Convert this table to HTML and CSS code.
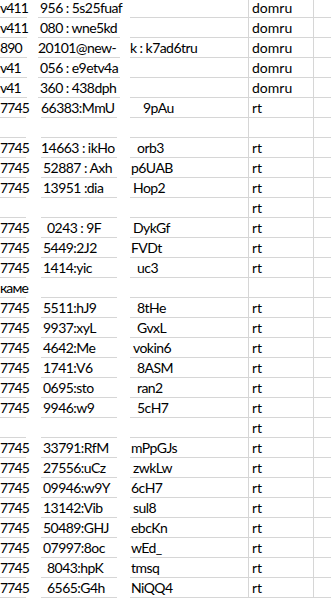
FILE: index.html
```html
<!DOCTYPE html>
<html>
<head>
<meta charset="utf-8">
<link rel="stylesheet" href="styles.css">
</head>
<body>
<div class="sheet">
  <div class="row"><div class="a"><span class="s1 w">v411</span><span class="s2 p1">956 : 5s25fuaf</span><span class="s3"></span></div><div class="b">domru</div><div class="c"></div></div>
  <div class="row"><div class="a"><span class="s1 w">v411</span><span class="s2 p1">080 : wne5kd</span><span class="s3"></span></div><div class="b">domru</div><div class="c"></div></div>
  <div class="row"><div class="a"><span class="s1 w">890</span><span class="s2">20101@new-</span><span class="s3">k : k7ad6tru</span></div><div class="b">domru</div><div class="c"></div></div>
  <div class="row"><div class="a"><span class="s1 w">v41</span><span class="s2 p1">056 : e9etv4a</span><span class="s3"></span></div><div class="b">domru</div><div class="c"></div></div>
  <div class="row"><div class="a"><span class="s1 w">v41</span><span class="s2 p1">360 : 438dph</span><span class="s3"></span></div><div class="b">domru</div><div class="c"></div></div>
  <div class="row"><div class="a"><span class="s1">7745</span><span class="s2">66383:MmU</span><span class="s3 q2">9pAu</span></div><div class="b">rt</div><div class="c"></div></div>
  <div class="row"><div class="a"><span class="s1"></span><span class="s2"></span><span class="s3"></span></div><div class="b"></div><div class="c"></div></div>
  <div class="row"><div class="a"><span class="s1">7745</span><span class="s2">14663 : ikHo</span><span class="s3 q3">orb3</span></div><div class="b">rt</div><div class="c"></div></div>
  <div class="row"><div class="a"><span class="s1">7745</span><span class="s2 p1">52887 : Axh</span><span class="s3 q0">p6UAB</span></div><div class="b">rt</div><div class="c"></div></div>
  <div class="row"><div class="a"><span class="s1">7745</span><span class="s2 p1">13951 :dia</span><span class="s3 q1">Hop2</span></div><div class="b">rt</div><div class="c"></div></div>
  <div class="row"><div class="a"><span class="s1"></span><span class="s2"></span><span class="s3"></span></div><div class="b">rt</div><div class="c"></div></div>
  <div class="row"><div class="a"><span class="s1">7745</span><span class="s2 p2">0243 : 9F</span><span class="s3 q1">DykGf</span></div><div class="b">rt</div><div class="c"></div></div>
  <div class="row"><div class="a"><span class="s1">7745</span><span class="s2 p1">5449:2J2</span><span class="s3 q0">FVDt</span></div><div class="b">rt</div><div class="c"></div></div>
  <div class="row"><div class="a"><span class="s1">7745</span><span class="s2 p1">1414:yic</span><span class="s3 q3">uc3</span></div><div class="b">rt</div><div class="c"></div></div>
  <div class="row"><div class="a"><span class="s1">каме</span><span class="s2"></span><span class="s3"></span></div><div class="b"></div><div class="c"></div></div>
  <div class="row"><div class="a"><span class="s1">7745</span><span class="s2 p1">5511:hJ9</span><span class="s3 q3">8tHe</span></div><div class="b">rt</div><div class="c"></div></div>
  <div class="row"><div class="a"><span class="s1">7745</span><span class="s2 p1">9937:xyL</span><span class="s3 q3">GvxL</span></div><div class="b">rt</div><div class="c"></div></div>
  <div class="row"><div class="a"><span class="s1">7745</span><span class="s2 p1">4642:Me</span><span class="s3 q1">vokin6</span></div><div class="b">rt</div><div class="c"></div></div>
  <div class="row"><div class="a"><span class="s1">7745</span><span class="s2 p1">1741:V6</span><span class="s3 q3">8ASM</span></div><div class="b">rt</div><div class="c"></div></div>
  <div class="row"><div class="a"><span class="s1">7745</span><span class="s2 p1">0695:sto</span><span class="s3 q3">ran2</span></div><div class="b">rt</div><div class="c"></div></div>
  <div class="row"><div class="a"><span class="s1">7745</span><span class="s2 p1">9946:w9</span><span class="s3 q3">5cH7</span></div><div class="b">rt</div><div class="c"></div></div>
  <div class="row"><div class="a"><span class="s1"></span><span class="s2"></span><span class="s3"></span></div><div class="b">rt</div><div class="c"></div></div>
  <div class="row"><div class="a"><span class="s1">7745</span><span class="s2 p1">33791:RfM</span><span class="s3 q0">mPpGJs</span></div><div class="b">rt</div><div class="c"></div></div>
  <div class="row"><div class="a"><span class="s1">7745</span><span class="s2 p1">27556:uCz</span><span class="s3 q1">zwkLw</span></div><div class="b">rt</div><div class="c"></div></div>
  <div class="row"><div class="a"><span class="s1">7745</span><span class="s2 p1">09946:w9Y</span><span class="s3 q0">6cH7</span></div><div class="b">rt</div><div class="c"></div></div>
  <div class="row"><div class="a"><span class="s1">7745</span><span class="s2 p1">13142:Vib</span><span class="s3 q1">sul8</span></div><div class="b">rt</div><div class="c"></div></div>
  <div class="row"><div class="a"><span class="s1">7745</span><span class="s2 p1">50489:GHJ</span><span class="s3 q0">ebcKn</span></div><div class="b">rt</div><div class="c"></div></div>
  <div class="row"><div class="a"><span class="s1">7745</span><span class="s2 p1">07997:8oc</span><span class="s3 q0">wEd_</span></div><div class="b">rt</div><div class="c"></div></div>
  <div class="row"><div class="a"><span class="s1">7745</span><span class="s2 p2">8043:hpK</span><span class="s3 q0">tmsq</span></div><div class="b">rt</div><div class="c"></div></div>
  <div class="row"><div class="a"><span class="s1">7745</span><span class="s2 p2">6565:G4h</span><span class="s3 q0">NiQQ4</span></div><div class="b">rt</div><div class="c"></div></div>
</div>
</body>
</html>
```

FILE: styles.css
```css
html, body {
  margin: 0;
  padding: 0;
  background: #fff;
  overflow: hidden;
}

.sheet {
  margin-top: -2px;
  width: 331px;
  font-family: Lato, "Open Sans", sans-serif;
  font-size: 14px;
  color: #000;
}

.row {
  display: flex;
  height: 20px;
}

.row > div,
.row span {
  box-sizing: border-box;
  height: 20px;
  line-height: 19px;
  white-space: nowrap;
}

.a {
  width: 249px;
  display: flex;
  letter-spacing: -0.55px;
  border-right: 1px solid #d6d6d6;
}

.s1 {
  width: 26px;
  letter-spacing: -0.9px;
  border-bottom: 1px solid #d6d6d6;
}

.s1.w {
  width: 27px;
}

.s2 {
  width: 76px;
  margin-left: 15px;
  padding-left: 0;
  border-bottom: 1px solid #d6d6d6;
}

.s1.w + .s2 {
  width: 82px;
  margin-left: 11px;
}

.s2.p1 { padding-left: 2px; }
.s2.p2 { padding-left: 6px; }

.s3 {
  flex: 1;
  margin-left: 13px;
  padding-left: 0;
  border-bottom: 1px solid #d6d6d6;
}

.s1.w + .s2 + .s3 {
  margin-left: 10px;
}

.s3.q0 { padding-left: 1px; }
.s3.q1 { padding-left: 3px; }
.s3.q2 { padding-left: 13px; }
.s3.q3 { padding-left: 7px; }

.b {
  width: 65px;
  padding-left: 3px;
  border-right: 1px solid #d6d6d6;
  border-bottom: 1px solid #d6d6d6;
}

.c {
  flex: 1;
  border-bottom: 1px solid #d6d6d6;
}
```
